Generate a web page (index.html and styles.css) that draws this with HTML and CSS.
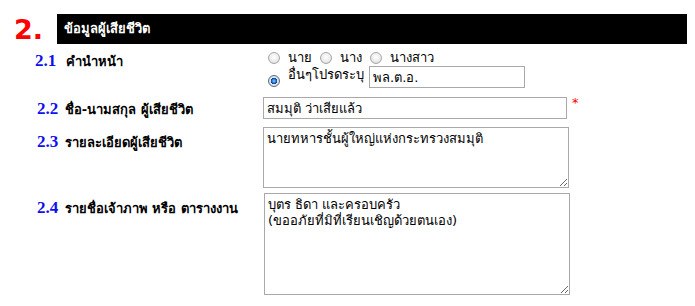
FILE: index.html
```html
<!DOCTYPE html>
<html lang="th">
<head>
    <meta charset="UTF-8">
    <meta name="viewport" content="width=device-width, initial-scale=1.0">
    <title>ข้อมูลผู้เสียชีวิต</title>
    <link rel="stylesheet" href="styles.css">
</head>
<body>
    <div class="form">
        <div class="section-head">
            <span class="sec-num">2.</span>
            <h2 class="sec-title">ข้อมูลผู้เสียชีวิต</h2>
        </div>

        <div class="row row-title">
            <div class="label"><span class="num">2.1</span> คำนำหน้า</div>
            <div class="field">
                <div class="radio-line">
                    <label class="radio"><input type="radio" name="prefix"> นาย</label>
                    <label class="radio"><input type="radio" name="prefix"> นาง</label>
                    <label class="radio"><input type="radio" name="prefix"> นางสาว</label>
                </div>
                <div class="radio-line other">
                    <label class="radio"><input type="radio" name="prefix" checked> อื่นๆโปรดระบุ</label>
                    <input type="text" class="text-input other-input" value="พล.ต.อ.">
                </div>
            </div>
        </div>

        <div class="row row-name">
            <div class="label"><span class="num">2.2</span> ชื่อ-นามสกุล ผู้เสียชีวิต</div>
            <div class="field">
                <input type="text" class="text-input name-input" value="สมมุติ ว่าเสียแล้ว">
                <span class="required">*</span>
            </div>
        </div>

        <div class="row row-detail">
            <div class="label"><span class="num">2.3</span> รายละเอียดผู้เสียชีวิต</div>
            <div class="field">
                <textarea class="text-area detail">นายทหารชั้นผู้ใหญ่แห่งกระทรวงสมมุติ</textarea>
            </div>
        </div>

        <div class="row row-hosts">
            <div class="label"><span class="num">2.4</span> รายชื่อเจ้าภาพ หรือ ตารางงาน</div>
            <div class="field">
                <textarea class="text-area hosts">บุตร ธิดา และครอบครัว
(ขออภัยที่มิที่เรียนเชิญด้วยตนเอง)</textarea>
            </div>
        </div>
    </div>
</body>
</html>
```

FILE: styles.css
```css
body {
    margin: 0;
    background-color: #fff;
    font-family: "DejaVu Sans", sans-serif;
    font-size: 13px;
    line-height: 16px;
    color: #000;
}

.form {
    width: 695px;
}

.section-head {
    display: flex;
    align-items: flex-start;
    padding: 14px 0 0 14px;
}

.sec-num {
    width: 43px;
    height: 30px;
    padding-top: 1px;
    box-sizing: border-box;
    font-weight: bold;
    font-size: 27px;
    line-height: 30px;
    color: #ff0000;
}

.sec-title {
    margin: 0;
    width: 630px;
    height: 30px;
    box-sizing: border-box;
    padding-left: 7px;
    background-color: #000;
    color: #fff;
    font-size: 13px;
    font-weight: bold;
    line-height: 30px;
}

.row {
    display: grid;
    grid-template-columns: 228px 320px;
    padding-left: 37px;
}

.row-title {
    margin-top: 6px;
}

.row-name {
    margin-top: 9px;
}

.row-detail {
    margin-top: 8px;
}

.row-hosts {
    margin-top: 5px;
}

.label {
    font-weight: bold;
    white-space: nowrap;
}

.row-title .label {
    padding-top: 3px;
}

.row-name .label {
    padding-top: 4px;
}

.row-detail .label,
.row-hosts .label {
    padding-top: 7px;
}

.num {
    font-family: "Liberation Serif", serif;
    font-size: 17px;
    font-weight: bold;
    color: #1010ee;
    margin-right: 2px;
}

.row-title .num {
    margin-left: -2px;
    margin-right: 5px;
}

.field {
    display: flex;
    flex-direction: column;
    margin-left: -2px;
}

.row-name .field {
    flex-direction: row;
    align-items: flex-start;
}

.radio-line {
    display: flex;
    align-items: center;
    gap: 8px;
    height: 16px;
    padding-left: 5px;
}

.radio-line.other {
    height: 22px;
    margin-top: 0;
    gap: 0;
}

.radio {
    display: flex;
    align-items: center;
    gap: 8px;
}

.radio input {
    appearance: none;
    -webkit-appearance: none;
    margin: 0;
    width: 12px;
    height: 12px;
    border-radius: 50%;
    border: 1px solid #a8a8a8;
    background: radial-gradient(circle at 50% 40%, #fff 0%, #ececec 55%, #cfcfcf 100%);
}

.radio-line.other .radio {
    align-items: flex-start;
    margin-right: 5px;
}

.radio-line.other .radio input {
    margin-top: 8px;
}

.radio input:checked {
    border-color: #5c6c80;
    background: radial-gradient(circle at 50% 50%, #8fc7ff 0%, #1f6fd0 30%, #0c3f8a 42%, #dfe6ee 50%, #c8ced6 100%);
}

.text-input {
    font-family: "DejaVu Sans", sans-serif;
    font-size: 13px;
    line-height: 16px;
    border: 1px solid #a9a9a9;
    height: 22px;
    box-sizing: border-box;
    padding: 1px 3px;
    margin: 0;
}

.other-input {
    width: 156px;
}

.name-input {
    width: 304px;
}

.required {
    color: #ff0000;
    font-size: 13px;
    margin-left: 5px;
    line-height: 10px;
    padding-top: 1px;
}

.text-area {
    font-family: "DejaVu Sans", sans-serif;
    font-size: 13px;
    line-height: 16px;
    border: 1px solid #a9a9a9;
    box-sizing: border-box;
    padding: 3px 3px;
    margin: 0;
    width: 306px;
}

.detail {
    height: 61px;
}

.hosts {
    height: 102px;
    margin-left: 1px;
}
```
